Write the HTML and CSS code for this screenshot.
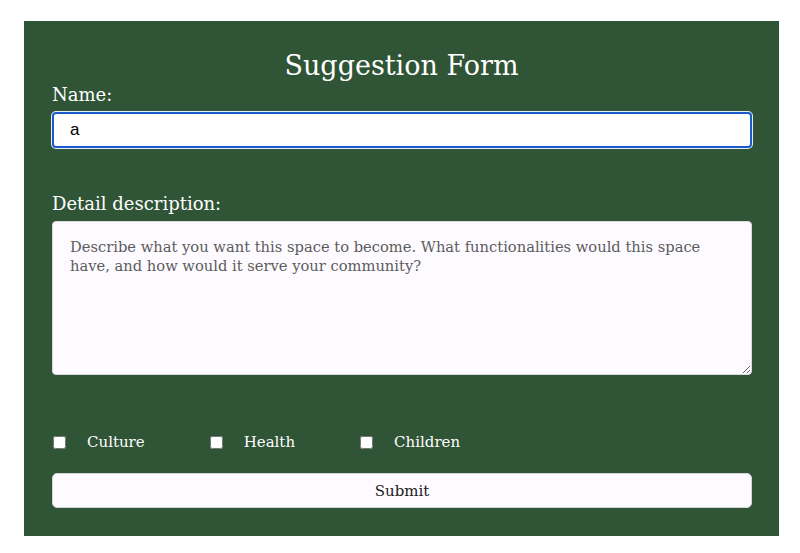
FILE: index.html
```html
<!DOCTYPE html>
<html lang="en">
<head>
<meta charset="utf-8">
<title>Suggestion Form</title>
<link rel="stylesheet" href="styles.css">
</head>
<body>
<form class="card">
  <h1 class="title">Suggestion Form</h1>
  <label class="label label-name" for="name">Name:</label>
  <input class="text-input" id="name" type="text" value="a" autofocus>
  <label class="label label-desc" for="desc">Detail description:</label>
  <textarea class="textarea" id="desc" placeholder="Describe what you want this space to become. What functionalities would this space have, and how would it serve your community?"></textarea>
  <div class="options">
    <label class="option"><input type="checkbox" class="check"><span>Culture</span></label>
    <label class="option"><input type="checkbox" class="check"><span>Health</span></label>
    <label class="option"><input type="checkbox" class="check"><span>Children</span></label>
  </div>
  <button type="button" class="submit">Submit</button>
</form>
</body>
</html>
```
FILE: styles.css
```css
html, body {
  margin: 0;
  background: #ffffff;
}
body {
  padding: 21px 24px 0;
  font-family: "DejaVu Serif", serif;
}
.card {
  width: 755px;
  height: 515px;
  box-sizing: border-box;
  background: #2f5436;
  padding: 29px 28px 28px 28px;
  display: flex;
  flex-direction: column;
  color: #ffffff;
}
.title {
  margin: 0;
  font-size: 27px;
  line-height: 32px;
  font-weight: normal;
  text-align: center;
}
.label {
  display: block;
  font-size: 18px;
  line-height: 22px;
}
.label-name {
  margin-top: 2px;
}
.text-input {
  margin-top: 6px;
  width: 700px;
  height: 36px;
  box-sizing: border-box;
  border: 2px solid #1b5ccc;
  border-radius: 4px;
  box-shadow: 0 0 0 1px #e9edf5;
  outline: none;
  background: #ffffff;
  padding: 0 0 0 16px;
  font-family: "Liberation Sans", Arial, sans-serif;
  font-size: 17px;
  color: #000000;
  caret-color: #000000;
}
.label-desc {
  margin-top: 45px;
}
.textarea {
  display: block;
  margin-top: 6px;
  width: 700px;
  height: 154px;
  box-sizing: border-box;
  border: 1px solid #d9d9d9;
  border-radius: 4px;
  background: #fdfbff;
  padding: 15px 17px;
  font-family: "DejaVu Serif", serif;
  font-size: 14.7px;
  line-height: 19px;
  color: #222222;
  resize: vertical;
}
.textarea::placeholder {
  color: #5c5c5c;
  opacity: 1;
}
.options {
  margin-top: 57px;
  height: 20px;
  display: flex;
  align-items: center;
  gap: 64px;
}
.option {
  display: flex;
  align-items: center;
  gap: 21px;
  font-size: 15px;
  line-height: 20px;
}
.check {
  margin: 0 0 0 1px;
  width: 13px;
  height: 13px;
}
.submit {
  margin-top: 21px;
  width: 700px;
  height: 35px;
  box-sizing: border-box;
  background: #fdfbff;
  border: 1px solid #d4d4d4;
  border-radius: 5px;
  font-family: "DejaVu Serif", serif;
  font-size: 15px;
  color: #1a1a1a;
}
```
